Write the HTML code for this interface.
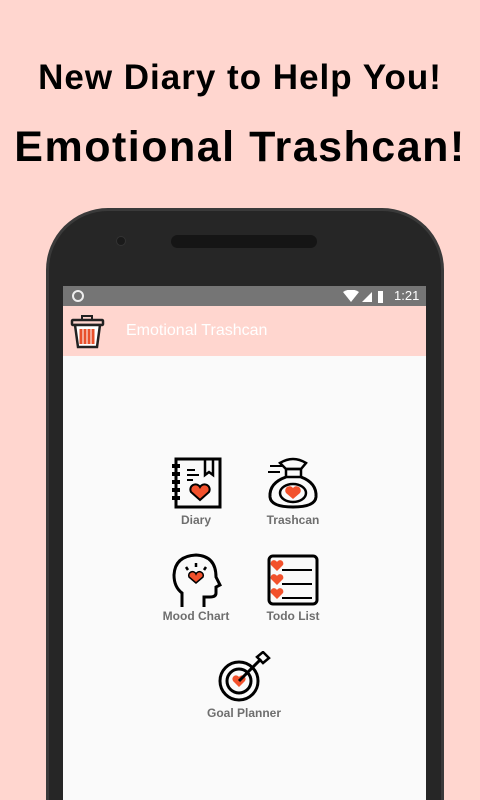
<!DOCTYPE html>
<html style="overflow:hidden;height:800px"><head><meta charset="utf-8"><style>
*{margin:0;padding:0;box-sizing:border-box}
html,body{overflow:hidden}
body{width:480px;height:800px;background:#ffd6cf;position:relative;overflow:hidden;font-family:"Liberation Sans",sans-serif}
.h{position:absolute;left:0;width:480px;text-align:center;font-weight:bold;color:#000;font-family:"Liberation Sans",sans-serif;white-space:nowrap}
.phone{position:absolute;left:46px;top:208px;width:398px;height:592px;background:#262626;border-radius:62px 62px 0 0;border:3px solid #3a3a3a;border-bottom:none}
.cam{position:absolute;left:116px;top:236px;width:10px;height:10px;border-radius:50%;background:#1a1a1a;border:1px solid #333}
.spk{position:absolute;left:171px;top:235px;width:146px;height:13px;border-radius:7px;background:#151515}
.screen{position:absolute;left:63px;top:286px;width:363px;height:514px;background:#fafafa}
.sb{height:20px;background:#757575;position:relative;color:#fff;font-size:13px}
.ab{height:50px;background:#ffd6cf;position:relative}
.ab span{position:absolute;left:63px;top:16px;color:#fff;font-size:16px}
.lbl{position:absolute;font-size:12px;font-weight:bold;color:#6e6e6e;text-align:center;width:100px}
svg.i{position:absolute}
</style></head><body>
<div class="h" style="top:58px;font-size:35px;letter-spacing:1px">New Diary to Help You!</div>
<div class="h" style="top:123px;font-size:43px;letter-spacing:1.5px">Emotional Trashcan!</div>
<div class="phone"></div>
<div class="cam"></div><div class="spk"></div>
<div class="screen">
 <div class="sb">
  <div style="position:absolute;left:9px;top:4px;width:12px;height:12px;border-radius:50%;border:2.5px solid #eee"></div>
  <svg style="position:absolute;left:280px;top:4px" width="40" height="13"><path d="M0 2 Q8 -3 16 2 L8 12Z" fill="#fff"/><path d="M19 12 L29 2 L29 12Z" fill="#fff"/><rect x="35" y="1" width="6" height="12" fill="#fff"/></svg>
  <span style="position:absolute;left:331px;top:2px">1:21</span>
 </div>
 <div class="ab">
  <svg style="position:absolute;left:7px;top:9px" width="36" height="34" viewBox="0 0 36 34"><rect x="12" y="1" width="10" height="4" fill="none" stroke="#222" stroke-width="2"/><rect x="2" y="5" width="31" height="5" rx="1" fill="none" stroke="#222" stroke-width="2.5"/><path d="M5 10 L8 32 H27 L30 10Z" fill="#fff" stroke="#222" stroke-width="2.5"/><path d="M11 14v15M15 14v15M19 14v15M23 14v15" stroke="#e8502b" stroke-width="3"/></svg>
  <span>Emotional Trashcan</span>
 </div>
</div>
<svg class="i" style="left:170px;top:457px" width="52" height="52" viewBox="0 0 52 52"><rect x="6" y="2" width="44" height="48" fill="none" stroke="#000" stroke-width="3"/><path d="M2 9h8M2 17h8M2 25h8M2 33h8M2 41h8" stroke="#000" stroke-width="4"/><path d="M35 2v16l4-3 4 3V2" fill="none" stroke="#000" stroke-width="2.5"/><path d="M17 13h8M17 18h12M17 23h6" stroke="#000" stroke-width="2"/><path d="M30 43 L21 35 A4.5 4.5 0 0 1 30 30 A4.5 4.5 0 0 1 39 35Z" fill="#f2512c" stroke="#000" stroke-width="2"/></svg>
<div class="lbl" style="left:146px;top:513px">Diary</div>
<svg class="i" style="left:266px;top:457px" width="54" height="52" viewBox="0 0 54 52"><path d="M14 6 Q27 -2 40 6 L35 12 H20Z" fill="none" stroke="#000" stroke-width="2.5"/><rect x="20" y="12" width="15" height="8" fill="none" stroke="#000" stroke-width="2.5"/><path d="M4 9h12M2 15h12" stroke="#000" stroke-width="2"/><path d="M20 20 Q3 26 4 40 Q5 50 27 50 Q49 50 50 40 Q51 26 35 20" fill="none" stroke="#000" stroke-width="3"/><ellipse cx="27" cy="36" rx="13" ry="9" fill="none" stroke="#000" stroke-width="2.5"/><path d="M27 42 L20 36 A3.5 3.5 0 0 1 27 31 A3.5 3.5 0 0 1 34 36Z" fill="#f2512c"/></svg>
<div class="lbl" style="left:243px;top:513px">Trashcan</div>
<svg class="i" style="left:172px;top:553px" width="50" height="56" viewBox="0 0 50 56"><path d="M10 54 V40 Q2 34 2 22 Q3 3 24 2 Q44 3 44 24 L48 32 L44 34 V40 Q44 44 38 44 H32 V54" fill="none" stroke="#000" stroke-width="3"/><path d="M24 10v4M14 14l2 3M34 14l-2 3" stroke="#000" stroke-width="2.5"/><path d="M24 30 L17 24 A3.5 3.5 0 0 1 24 21 A3.5 3.5 0 0 1 31 24Z" fill="#f2512c" stroke="#000" stroke-width="1.5"/></svg>
<div class="lbl" style="left:146px;top:609px">Mood Chart</div>
<svg class="i" style="left:267px;top:554px" width="52" height="52" viewBox="0 0 52 52"><rect x="2" y="2" width="48" height="48" rx="4" fill="none" stroke="#000" stroke-width="3"/><path d="M15 16h30M15 30h30M15 44h30" stroke="#000" stroke-width="2"/><g fill="#f2512c"><path d="M10 17 L4 11 A3 3 0 0 1 10 8 A3 3 0 0 1 16 11Z"/><path d="M10 31 L4 25 A3 3 0 0 1 10 22 A3 3 0 0 1 16 25Z"/><path d="M10 45 L4 39 A3 3 0 0 1 10 36 A3 3 0 0 1 16 39Z"/></g></svg>
<div class="lbl" style="left:243px;top:609px">Todo List</div>
<svg class="i" style="left:217px;top:651px" width="56" height="52" viewBox="0 0 56 52"><circle cx="22" cy="30" r="19" fill="none" stroke="#000" stroke-width="3"/><circle cx="22" cy="30" r="12" fill="none" stroke="#000" stroke-width="3"/><path d="M22 36 L16 30 A3.5 3.5 0 0 1 22 26 A3.5 3.5 0 0 1 28 30Z" fill="#f2512c"/><path d="M22 30 L44 8" stroke="#000" stroke-width="3"/><path d="M40 6 L46 1 L52 7 L46 12Z" fill="none" stroke="#000" stroke-width="2.5"/></svg>
<div class="lbl" style="left:194px;top:706px">Goal Planner</div>
</body></html>
